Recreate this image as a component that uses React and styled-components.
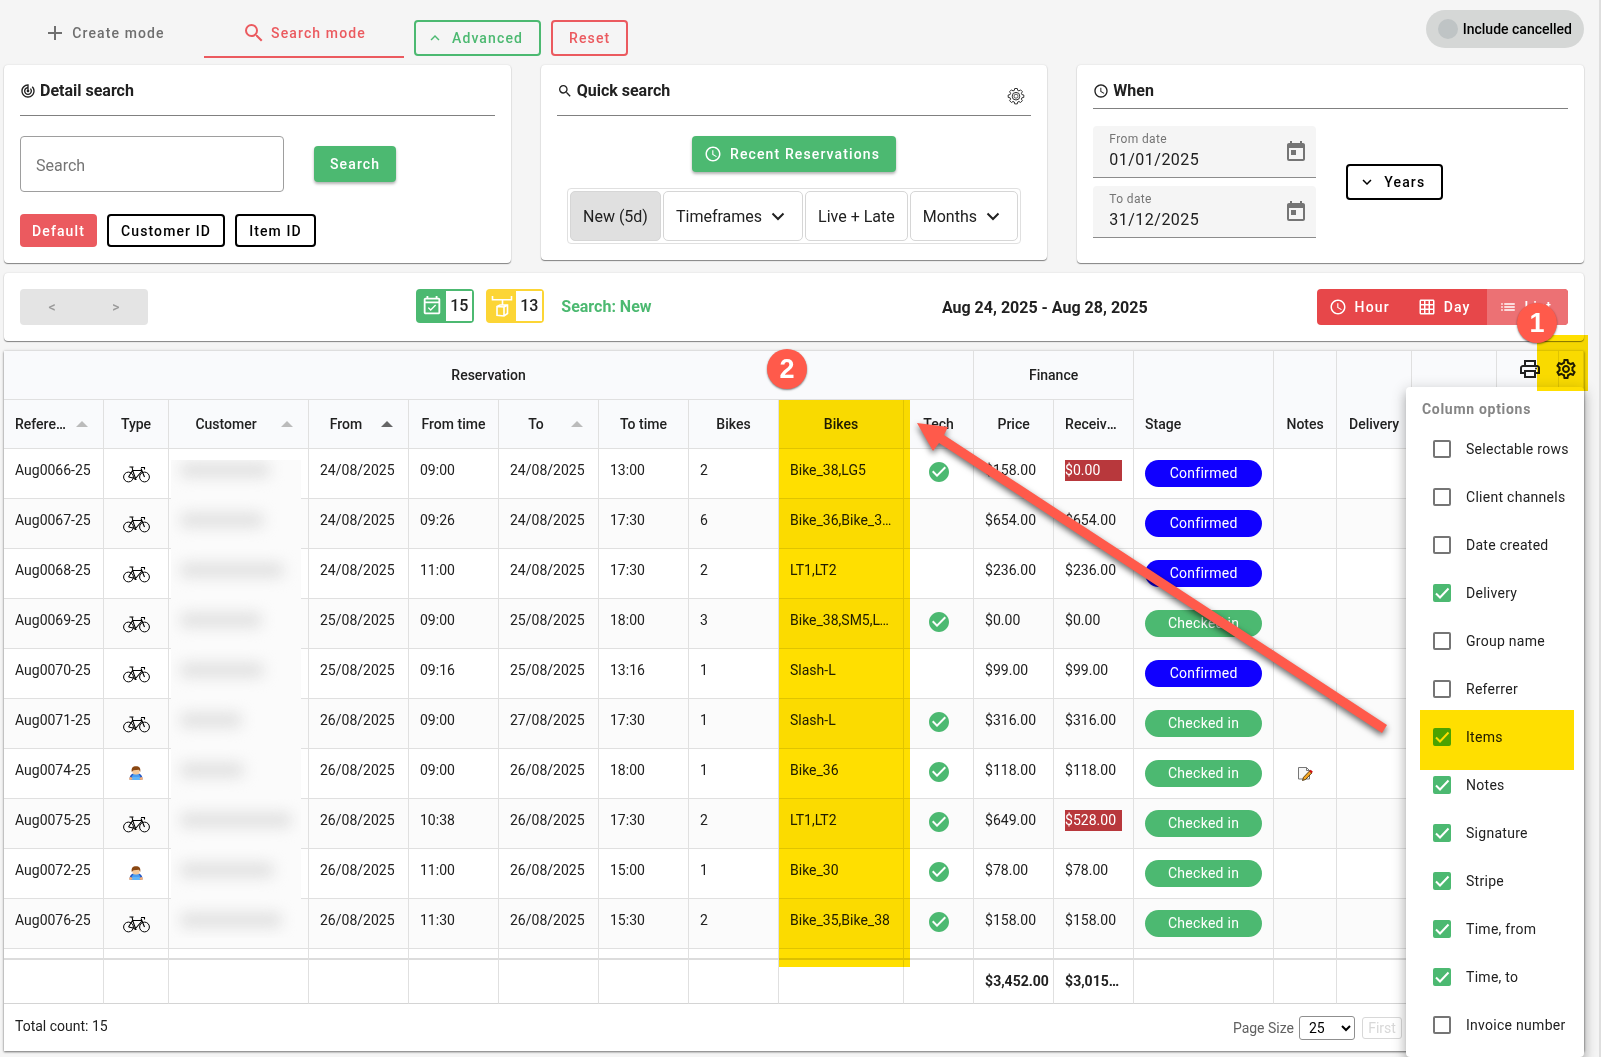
import React from "react";
import styled, { createGlobalStyle, css } from "styled-components";
import {
  MdAdd,
  MdSearch,
  MdTrackChanges,
  MdAccessTime,
  MdExpandLess,
  MdExpandMore,
  MdToday,
  MdOutlineEventAvailable,
  MdGridOn,
  MdList,
  MdCheckCircle,
  MdOutlinePrint,
  MdOutlineSettings,
} from "react-icons/md";

const green = "#4cb971";
const red = "#eb5a5f";
const ink = "#212121";
const line = "#e0e0e0";

const Global = createGlobalStyle`
  *, *::before, *::after { box-sizing: border-box; }
  html { background: #f5f5f5; }
  body { margin: 0; overflow: hidden; }
  body, button, input, select, table {
    font-family: Roboto, "Liberation Sans", sans-serif;
    color: ${ink};
  }
  button { cursor: pointer; }
`;

const Page = styled.div`
  position: relative;
  padding: 10px 15px 6px 4px;
  border-right: 2px solid #dedede;
  background: #f5f5f5;
  font-size: 14px;
`;

const surface = css`
  background: #fff;
  border-radius: 4px;
  box-shadow: 0 1px 1px rgba(0, 0, 0, 0.45), 0 0 2px rgba(0, 0, 0, 0.12);
`;

const buttonText = css`
  font-size: 14px;
  font-weight: 500;
  letter-spacing: 0.08em;
  white-space: nowrap;
`;

/* ---------- top bar ---------- */

const TopBar = styled.header`
  display: flex;
  align-items: flex-start;
  height: 55px;
`;

const Tab = styled.button`
  ${buttonText}
  display: flex;
  align-items: center;
  justify-content: center;
  gap: 5px;
  width: 200px;
  height: 48px;
  padding: 0;
  border: 0;
  border-bottom: 2px solid ${(p) => (p.$active ? red : "transparent")};
  background: none;
  color: ${(p) => (p.$active ? red : "#6f6f6f")};
  svg {
    font-size: 24px;
  }
`;

const TopActions = styled.div`
  display: flex;
  gap: 10px;
  padding: 10px 0 0 10px;
`;

const Button = styled.button`
  ${buttonText}
  display: inline-flex;
  align-items: center;
  justify-content: center;
  gap: 8px;
  height: ${(p) => (p.$small ? 33 : 36)}px;
  padding: 0 ${(p) => (p.$small ? 12 : 16)}px;
  ${(p) => p.$icon && `padding-left: ${p.$outline ? 10 : 12}px;`}
  border-radius: 4px;
  border: ${(p) => (p.$outline ? `2px solid ${p.$outline}` : "0")};
  background: ${(p) => p.$fill || "transparent"};
  color: ${(p) => (p.$fill ? "#fff" : p.$outline)};
  box-shadow: ${(p) => (p.$raised ? "0 2px 3px rgba(0, 0, 0, 0.3)" : "none")};
  svg {
    font-size: 18px;
  }
`;

const CancelToggle = styled.button`
  display: flex;
  align-items: center;
  gap: 5px;
  height: 38px;
  margin-left: auto;
  padding: 0 12px;
  border: 0;
  border-radius: 19px;
  background: #d5d7d6;
  color: #000;
  font-size: 14px;
  font-weight: 500;
`;

const ToggleDot = styled.span`
  width: 20px;
  height: 20px;
  border-radius: 50%;
  background: #bfc4c5;
`;

/* ---------- search cards ---------- */

const Cards = styled.div`
  display: grid;
  grid-template-columns: repeat(3, minmax(0, 1fr));
  align-items: start;
  gap: 30px;
`;

const Card = styled.section`
  ${surface}
  padding: 14px 16px 16px;
`;

const CardHead = styled.div`
  display: flex;
  align-items: flex-start;
  justify-content: space-between;
  height: ${(p) => (p.$short ? 30 : 37)}px;
  border-bottom: 1px solid #808080;
`;

const CardTitle = styled.h2`
  display: flex;
  align-items: center;
  gap: 4px;
  margin: 0;
  font-size: 16px;
  font-weight: 700;
  line-height: 24px;
  svg {
    font-size: 16px;
  }
`;

const GearButton = styled.button`
  padding: 8px 6px 0;
  border: 0;
  background: none;
  line-height: 0;
`;

const SearchRow = styled.div`
  display: flex;
  align-items: center;
  gap: 30px;
  margin-top: 20px;
`;

const SearchInput = styled.input`
  width: 264px;
  height: 56px;
  padding: 2px 15px 0;
  border: 1px solid #9e9e9e;
  border-radius: 4px;
  background: #fff;
  font-size: 16px;
  outline: 0;
  &::placeholder {
    color: #757575;
    opacity: 1;
  }
`;

const TagRow = styled.div`
  display: flex;
  gap: 10px;
  margin-top: 22px;
`;

const QuickBody = styled.div`
  display: flex;
  flex-direction: column;
  align-items: center;
  gap: 16px;
  margin-top: 20px;
`;

const Segments = styled.div`
  display: flex;
  gap: 2px;
  padding: 2px;
  border: 1px solid ${line};
  border-radius: 4px;
`;

const Segment = styled.button`
  display: flex;
  align-items: center;
  gap: 4px;
  height: 50px;
  padding: 0 12px;
  border: 1px solid #d6d6d6;
  border-radius: 5px;
  background: ${(p) => (p.$active ? "#e0e0e0" : "#fff")};
  font-size: 16px;
  white-space: nowrap;
`;

const WhenBody = styled.div`
  display: flex;
  align-items: center;
  gap: 30px;
  margin: 17px 0 9px;
`;

const DateFields = styled.div`
  display: flex;
  flex-direction: column;
  gap: 8px;
  width: 223px;
`;

const DateField = styled.div`
  display: grid;
  grid-template-columns: 1fr auto;
  align-items: center;
  height: 52px;
  padding: 0 8px 0 16px;
  border-bottom: 1px solid #8c8c8c;
  border-radius: 4px 4px 0 0;
  background: #f5f5f5;
  color: #757575;
  svg {
    font-size: 24px;
  }
`;

const DateText = styled.div`
  display: flex;
  flex-direction: column;
  min-width: 0;
  padding-bottom: 4px;
  label {
    font-size: 12px;
    line-height: 20px;
    letter-spacing: 0.03em;
  }
  input {
    width: 100%;
    height: 22px;
    padding: 0;
    border: 0;
    outline: 0;
    background: none;
    font-size: 16px;
    letter-spacing: 0.03em;
  }
`;

/* ---------- result bar ---------- */

const ResultBar = styled.section`
  ${surface}
  display: flex;
  align-items: center;
  height: 68px;
  margin-top: 10px;
  padding: 0 16px;
`;

const Nav = styled.div`
  display: flex;
  border-radius: 4px;
  background: #e4e4e4;
  button {
    width: 64px;
    height: 36px;
    border: 0;
    background: none;
    color: #999;
    font-size: 14px;
    font-weight: 500;
  }
`;

const Summary = styled.div`
  display: flex;
  flex: 1;
  align-items: center;
  justify-content: center;
  gap: 12px;
  padding: 0 22px 2px 0;
`;

const Counter = styled.span`
  display: flex;
  height: 34px;
  padding: 2px;
  border-radius: 4px;
  background: ${(p) => p.$color};
`;

const CounterIcon = styled.span`
  display: flex;
  align-items: center;
  justify-content: center;
  width: 28px;
  color: #fff;
  svg {
    font-size: 22px;
  }
`;

const CounterValue = styled.span`
  width: 26px;
  background: #fff;
  font-size: 16px;
  font-weight: 500;
  line-height: 30px;
  text-align: center;
`;

const SearchName = styled.span`
  padding-left: 5px;
  color: ${green};
  font-size: 16px;
  font-weight: 700;
`;

const DateRange = styled.span`
  font-size: 16px;
  font-weight: 700;
  padding-right: 169px;
`;

const Views = styled.div`
  display: flex;
  overflow: hidden;
  border-radius: 4px;
  background: #e7474a;
`;

const ViewButton = styled.button`
  ${buttonText}
  display: flex;
  align-items: center;
  gap: 8px;
  height: 36px;
  padding: 0 16px 0 12px;
  border: 0;
  background: ${(p) => (p.$active ? "#ec7174" : "transparent")};
  color: #fff;
  svg {
    font-size: 18px;
  }
`;

/* ---------- table ---------- */

const TablePanel = styled.section`
  position: relative;
  margin-top: 10px;
  background: #fff;
  box-shadow: 0 1px 2px rgba(0, 0, 0, 0.5), 0 0 3px rgba(0, 0, 0, 0.15);
`;

const Grid = styled.table`
  width: 100%;
  table-layout: fixed;
  border-collapse: separate;
  border-spacing: 0;
  font-size: 14px;
  line-height: 21px;
`;

const clipped = css`
  white-space: nowrap;
  overflow: hidden;
  text-overflow: ellipsis;
`;

const HeadCell = styled.th`
  ${clipped}
  position: relative;
  height: 49px;
  padding: 0 ${(p) => p.$right || 11}px 0 11px;
  border-right: 1px solid ${line};
  border-bottom: 1px solid ${line};
  background: #f9fafc;
  font-weight: 500;
  text-align: ${(p) => p.$align || "center"};
  vertical-align: ${(p) => (p.rowSpan ? "bottom" : "middle")};
  ${(p) => p.rowSpan && "padding-bottom: 13px;"}
`;

const SortArrow = styled.span`
  position: absolute;
  right: 15px;
  top: 21px;
  border: 6px solid transparent;
  border-top: 0;
  border-bottom-color: ${(p) => (p.$active ? "#666" : "#bbb")};
`;

const Row = styled.tr`
  background: ${(p) => (p.$odd ? "#fbfbfb" : "#fff")};
`;

const Cell = styled.td`
  ${clipped}
  height: 50px;
  padding: 11px 11px 0;
  border-right: 1px solid ${line};
  border-bottom: 1px solid ${line};
  vertical-align: top;
`;

const HiddenCell = styled(Cell)`
  padding: ${(p) => (p.$first ? 11 : 0)}px 7px 0 2px;
  overflow: visible;
`;

const Redacted = styled.div`
  position: relative;
  height: ${(p) => (p.$short ? 39 : 50)}px;
  margin-bottom: -2px;
  padding: ${(p) => (p.$first ? 2 : 13)}px 0 0 9px;
  background: #fbfbfb;
  overflow: hidden;
`;

const Smudge = styled.span`
  display: block;
  height: 16px;
  border-radius: 6px;
  background: #e2e2e2;
  filter: blur(7px);
`;

const Overdue = styled.span`
  display: block;
  background: #b8383c;
  color: #fff;
`;

const Stage = styled.span`
  display: block;
  height: 27px;
  border-radius: 14px;
  background: ${(p) => (p.$confirmed ? "#1000ff" : green)};
  color: #fff;
  line-height: 27px;
  text-align: center;
  letter-spacing: 0.02em;
`;

const IconBox = styled.span`
  display: flex;
  justify-content: center;
  padding-top: ${(p) => p.$top}px;
  color: ${green};
  svg {
    flex: none;
  }
`;

const StripCell = styled.td`
  height: 9px;
  padding: 0;
  border-right: 1px solid ${line};
`;

const TotalCell = styled.td`
  ${clipped}
  height: 46px;
  padding: 0 ${(p) => p.$right || 0}px 0 11px;
  border-top: 2px solid #dcdcdc;
  border-right: 1px solid ${line};
  border-bottom: 1px solid #d4d4d4;
  font-weight: 700;
`;

const TableTools = styled.div`
  position: absolute;
  top: 6px;
  right: 6px;
  display: flex;
  gap: 12px;
  button {
    padding: 0;
    border: 0;
    background: none;
    line-height: 0;
  }
  svg {
    font-size: 24px;
  }
`;

const Pager = styled.footer`
  display: flex;
  align-items: center;
  height: 47px;
  padding: 0 182px 4px 11px;
`;

const PageSize = styled.label`
  display: flex;
  align-items: center;
  gap: 5px;
  margin-left: auto;
  padding-top: 4px;
  color: #616161;
`;

const SizeSelect = styled.select`
  width: 56px;
  height: 24px;
  padding: 0 0 0 5px;
  border: 1px solid #8f8f8f;
  border-radius: 3px;
  background: #fff;
  color: #000;
  font-size: 14px;
`;

const FirstButton = styled.button`
  width: 40px;
  height: 22px;
  margin: 4px 0 0 7px;
  padding: 0;
  border: 1px solid #d8d8d8;
  border-radius: 3px;
  background: #fff;
  font-size: 14px;
  &:disabled {
    color: #d8d8d8;
  }
`;

/* ---------- column menu ---------- */

const Menu = styled.div`
  position: absolute;
  top: 36px;
  right: 0;
  z-index: 2;
  width: 178px;
  padding: 0 0 8px;
  border-radius: 4px;
  background: #fff;
  box-shadow: 0 5px 5px -3px rgba(0, 0, 0, 0.2), 0 8px 10px 1px rgba(0, 0, 0, 0.14),
    0 3px 14px 2px rgba(0, 0, 0, 0.16);
`;

const MenuTitle = styled.div`
  height: 38px;
  padding: 12px 16px 0;
  color: #858585;
  font-weight: 700;
  line-height: 20px;
  letter-spacing: 0.05em;
`;

const Option = styled.label`
  display: flex;
  align-items: center;
  gap: 15px;
  height: 48px;
  padding-left: 27px;
  letter-spacing: 0.02em;
  white-space: nowrap;
`;

const CheckWrap = styled.span`
  display: grid;
  width: 18px;
  height: 18px;
  > * {
    grid-area: 1 / 1;
  }
  svg {
    pointer-events: none;
    z-index: 1;
  }
`;

const Checkbox = styled.input`
  appearance: none;
  width: 18px;
  height: 18px;
  margin: 0;
  border: 2px solid #757575;
  border-radius: 2px;
  &:checked {
    border-color: ${green};
    background: ${green};
  }
`;

/* ---------- guide marks ---------- */

const Highlight = styled.div`
  position: absolute;
  z-index: 3;
  background: #ffdf00;
  mix-blend-mode: multiply;
  pointer-events: none;
`;

const ToolHighlight = styled(Highlight)`
  top: 335px;
  right: 11px;
  width: 51px;
  height: 56px;
`;

const ColumnHighlight = styled(Highlight)`
  top: 400px;
  left: 779px;
  width: 131px;
  height: 567px;
`;

const OptionHighlight = styled(Highlight)`
  top: 710px;
  right: 25px;
  width: 154px;
  height: 60px;
`;

const Marker = styled.div`
  position: absolute;
  z-index: 4;
  width: 40px;
  height: 40px;
  border-radius: 50%;
  background: #ff5a4b;
  box-shadow: 0 1px 2px rgba(0, 0, 0, 0.5);
  color: #fff;
  font: bold 27px/40px "Liberation Sans", sans-serif;
  text-align: center;
`;

const MarkerOne = styled(Marker)`
  top: 303px;
  right: 42px;
`;

const MarkerTwo = styled(Marker)`
  top: 349px;
  left: 767px;
`;

const Arrow = styled.svg`
  position: absolute;
  z-index: 4;
  top: 410px;
  left: 904px;
  filter: drop-shadow(0 3px 3px rgba(0, 0, 0, 0.6));
  pointer-events: none;
`;

/* ---------- drawings ---------- */

const Chevron = () => (
  <svg width="24" height="24" viewBox="0 0 24 24" fill="none" stroke="#212121" strokeWidth="2">
    <path d="M6.500 9.500 12 15l5.500-5.500" />
  </svg>
);

const ThinGear = () => (
  <svg width="18" height="18" viewBox="0 0 18 18" fill="none" stroke="#333" strokeWidth="1">
    <path d="M7.700 1.500h2.600l.4 1.900 1.300.5 1.600-1 1.800 1.800-1 1.600.5 1.300 1.900.4v2.400l-1.900.4-.5 1.300 1 1.600-1.800 1.800-1.600-1-1.300.5-.4 1.900H7.700l-.4-1.900-1.300-.5-1.600 1-1.800-1.800 1-1.600-.5-1.300-1.900-.4V8l1.900-.4.5-1.300-1-1.600 1.800-1.800 1.600 1 1.300-.5z" />
    <circle cx="9" cy="9.200" r="3.800" />
    <circle cx="9" cy="9.200" r="2" strokeWidth=".8" />
  </svg>
);

const RackBox = () => (
  <svg width="22" height="22" viewBox="0 0 22 22" fill="none" stroke="#fff" strokeWidth="1.600">
    <path d="M1.500 1v3.800h19V1M11.500 5v5" />
    <path d="M6 11.500l3-1.500h7.500v8.500L13 21l-7-.8zM6 11.500l7 .5v9M13 12l3.500-2" />
  </svg>
);

const Bicycle = () => (
  <svg width="27" height="17" viewBox="0 0 27 17" fill="none" stroke="#000">
    <circle cx="5.500" cy="11" r="4.900" strokeWidth="1" />
    <circle cx="21.500" cy="11" r="4.900" strokeWidth="1" />
    <path
      d="M5.500 11 9.500 4.500h9.500M9.500 4l3 8.500L19 5M21.500 11 18 2.500M18 1.500h3.500v2M6.500 1h4M9 1l.8 3.500M5.500 11l7 1.500M11.500 13.500h2"
      strokeWidth="1.100"
    />
  </svg>
);

const Person = () => (
  <svg width="14" height="15" viewBox="0 0 14 15">
    <path d="M.8 14C0 11 1.500 8.500 4 7.500h6c2.500 1 4 3.500 3.200 6.500z" fill="#2456c4" />
    <path d="M3 14v-2.500L4.500 8.500h5L11 11.500V14z" fill="#5fb4f8" />
    <path d="M2.500 11 4.500 8h5l2 3z" fill="#4a9df0" />
    <circle cx="1.700" cy="12.500" r="1.600" fill="#f5b078" />
    <circle cx="12.300" cy="12.500" r="1.600" fill="#f5b078" />
    <rect x="3.500" y="2.500" width="7" height="6" rx="2.500" fill="#f3c89a" />
    <path d="M2.800 6C2 2 3.800.3 7 .3S12 2 11.200 6L10 3.800 4.500 4.200z" fill="#8a4712" />
  </svg>
);

const NotePencil = () => (
  <svg width="15" height="15" viewBox="0 0 15 15">
    <path d="M.5 1.500h8l3 3v8.500H.5z" fill="#f7f7f7" stroke="#777" />
    <path d="M8.500 1.500v3h3" fill="none" stroke="#777" />
    <path d="M4.500 14.500l1-3.200L11.500 5l2.300 2L7.500 13.500z" fill="#f5a623" stroke="#3a2500" strokeWidth=".8" />
    <path d="M11.200 5.200l1.500-1.400 2.200 2-1.400 1.500z" fill="#c11" />
  </svg>
);

const Tick = () => (
  <svg width="18" height="18" viewBox="0 0 18 18" fill="none" stroke="#fff" strokeWidth="2">
    <path d="M3 9.500l4 4L15.500 4.500" />
  </svg>
);

/* ---------- data ---------- */

const widths = [100, 65, 140, 100, 90, 100, 90, 90, 125, 70, 80, 80, 140, 63, 75, 85, 62];

const headings = [
  { label: "Reference", sort: true, align: "left" },
  { label: "Type" },
  { label: "Customer", sort: true },
  { label: "From", sort: true, active: true },
  { label: "From time" },
  { label: "To", sort: true },
  { label: "To time" },
  { label: "Bikes" },
  { label: "Bikes" },
  { label: "Tech" },
  { label: "Price" },
  { label: "Received", align: "left", right: 14 },
];

const rows = [
  ["Aug0066-25", "bike", 90, "24/08/2025", "09:00", "24/08/2025", "13:00", 2, "Bike_38,LG5", true, "$158.00", "$0.00", "Confirmed", true],
  ["Aug0067-25", "bike", 84, "24/08/2025", "09:26", "24/08/2025", "17:30", 6, "Bike_36,Bike_37,Bike_38", false, "$654.00", "$654.00", "Confirmed"],
  ["Aug0068-25", "bike", 104, "24/08/2025", "11:00", "24/08/2025", "17:30", 2, "LT1,LT2", false, "$236.00", "$236.00", "Confirmed"],
  ["Aug0069-25", "bike", 82, "25/08/2025", "09:00", "25/08/2025", "18:00", 3, "Bike_38,SM5,LG5", true, "$0.00", "$0.00", "Checked in"],
  ["Aug0070-25", "bike", 84, "25/08/2025", "09:16", "25/08/2025", "13:16", 1, "Slash-L", false, "$99.00", "$99.00", "Confirmed"],
  ["Aug0071-25", "bike", 62, "26/08/2025", "09:00", "27/08/2025", "17:30", 1, "Slash-L", true, "$316.00", "$316.00", "Checked in"],
  ["Aug0074-25", "person", 64, "26/08/2025", "09:00", "26/08/2025", "18:00", 1, "Bike_36", true, "$118.00", "$118.00", "Checked in", false, true],
  ["Aug0075-25", "bike", 112, "26/08/2025", "10:38", "26/08/2025", "17:30", 2, "LT1,LT2", true, "$649.00", "$528.00", "Checked in", true],
  ["Aug0072-25", "person", 94, "26/08/2025", "11:00", "26/08/2025", "15:00", 1, "Bike_30", true, "$78.00", "$78.00", "Checked in"],
  ["Aug0076-25", "bike", 102, "26/08/2025", "11:30", "26/08/2025", "15:30", 2, "Bike_35,Bike_38", true, "$158.00", "$158.00", "Checked in"],
];

const totals = { 10: "$3,452.00", 11: "$3,015.00" };

const options = [
  ["Selectable rows", false],
  ["Client channels", false],
  ["Date created", false],
  ["Delivery", true],
  ["Group name", false],
  ["Referrer", false],
  ["Items", true],
  ["Notes", true],
  ["Signature", true],
  ["Stripe", true],
  ["Time, from", true],
  ["Time, to", true],
  ["Invoice number", false],
];

const columns = Array.from({ length: 18 }, (_, i) => i);

function DateInput({ id, label, value }) {
  return (
    <DateField>
      <DateText>
        <label htmlFor={id}>{label}</label>
        <input id={id} defaultValue={value} />
      </DateText>
      <MdToday />
    </DateField>
  );
}

function ReservationRow({ row, index }) {
  const [ref, type, smudge, from, fromTime, to, toTime, count, items, tech, price, received, stage, overdue, note] = row;
  const first = index === 0;
  const last = index === rows.length - 1;
  return (
    <Row $odd={index % 2 === 1}>
      <Cell>{ref}</Cell>
      <Cell>
        <IconBox $top={6}>{type === "bike" ? <Bicycle /> : <Person />}</IconBox>
      </Cell>
      <HiddenCell $first={first}>
        <Redacted $first={first} $short={first || last}>
          <Smudge style={{ width: smudge }} />
        </Redacted>
      </HiddenCell>
      <Cell>{from}</Cell>
      <Cell>{fromTime}</Cell>
      <Cell>{to}</Cell>
      <Cell>{toTime}</Cell>
      <Cell>{count}</Cell>
      <Cell>{items}</Cell>
      <Cell>{tech && <IconBox $top={0}><MdCheckCircle size={24} /></IconBox>}</Cell>
      <Cell>{price}</Cell>
      <Cell>{overdue ? <Overdue>{received}</Overdue> : received}</Cell>
      <Cell><Stage $confirmed={stage === "Confirmed"}>{stage}</Stage></Cell>
      <Cell>{note && <IconBox $top={6}><NotePencil /></IconBox>}</Cell>
      <Cell />
      <Cell />
      <Cell />
      <Cell />
    </Row>
  );
}

export default function App() {
  return (
    <Page>
      <Global />
      <TopBar>
        <Tab><MdAdd />Create mode</Tab>
        <Tab $active><MdSearch />Search mode</Tab>
        <TopActions>
          <Button $icon $outline={green}><MdExpandLess />Advanced</Button>
          <Button $outline={red}>Reset</Button>
        </TopActions>
        <CancelToggle><ToggleDot />Include cancelled</CancelToggle>
      </TopBar>

      <Cards>
        <Card>
          <CardHead><CardTitle><MdTrackChanges />Detail search</CardTitle></CardHead>
          <SearchRow>
            <SearchInput aria-label="Search" placeholder="Search" />
            <Button $fill={green} $raised>Search</Button>
          </SearchRow>
          <TagRow>
            <Button $small $fill={red}>Default</Button>
            <Button $small $outline="#000">Customer ID</Button>
            <Button $small $outline="#000">Item ID</Button>
          </TagRow>
        </Card>

        <Card>
          <CardHead>
            <CardTitle><MdSearch />Quick search</CardTitle>
            <GearButton aria-label="Quick search settings"><ThinGear /></GearButton>
          </CardHead>
          <QuickBody>
            <Button $icon $fill={green} $raised><MdAccessTime />Recent Reservations</Button>
            <Segments>
              <Segment $active>New (5d)</Segment>
              <Segment>Timeframes<Chevron /></Segment>
              <Segment>Live + Late</Segment>
              <Segment>Months<Chevron /></Segment>
            </Segments>
          </QuickBody>
        </Card>

        <Card>
          <CardHead $short><CardTitle><MdAccessTime />When</CardTitle></CardHead>
          <WhenBody>
            <DateFields>
              <DateInput id="from-date" label="From date" value="01/01/2025" />
              <DateInput id="to-date" label="To date" value="31/12/2025" />
            </DateFields>
            <Button $icon $outline="#000"><MdExpandMore />Years</Button>
          </WhenBody>
        </Card>
      </Cards>

      <ResultBar>
        <Nav>
          <button>&lt;</button>
          <button>&gt;</button>
        </Nav>
        <Summary>
          <Counter $color={green}>
            <CounterIcon><MdOutlineEventAvailable /></CounterIcon>
            <CounterValue>15</CounterValue>
          </Counter>
          <Counter $color="#fcd535">
            <CounterIcon><RackBox /></CounterIcon>
            <CounterValue>13</CounterValue>
          </Counter>
          <SearchName>Search: New</SearchName>
        </Summary>
        <DateRange>Aug 24, 2025 - Aug 28, 2025</DateRange>
        <Views>
          <ViewButton><MdAccessTime />Hour</ViewButton>
          <ViewButton><MdGridOn />Day</ViewButton>
          <ViewButton $active><MdList />List</ViewButton>
        </Views>
      </ResultBar>

      <TablePanel>
        <Grid>
          <colgroup>
            {columns.map((c) => <col key={c} style={{ width: widths[c] }} />)}
          </colgroup>
          <thead>
            <tr>
              <HeadCell colSpan={10}>Reservation</HeadCell>
              <HeadCell colSpan={2}>Finance</HeadCell>
              <HeadCell rowSpan={2} $align="left">Stage</HeadCell>
              <HeadCell rowSpan={2}>Notes</HeadCell>
              <HeadCell rowSpan={2}>Delivery</HeadCell>
              <HeadCell rowSpan={2} />
              <HeadCell rowSpan={2} />
              <HeadCell rowSpan={2} />
            </tr>
            <tr>
              {headings.map((h, i) => (
                <HeadCell key={i} $right={h.sort ? 36 : h.right} $align={h.align}>
                  {h.label}
                  {h.sort && <SortArrow $active={h.active} />}
                </HeadCell>
              ))}
            </tr>
          </thead>
          <tbody>
            {rows.map((row, i) => <ReservationRow key={row[0]} row={row} index={i} />)}
            <tr>{columns.map((c) => <StripCell key={c} />)}</tr>
          </tbody>
          <tfoot>
            <tr>
              {columns.map((c) => (
                <TotalCell key={c} $right={c === 11 ? 14 : 0}>{totals[c]}</TotalCell>
              ))}
            </tr>
          </tfoot>
        </Grid>
        <Pager>
          <span>Total count: 15</span>
          <PageSize>
            Page Size
            <SizeSelect defaultValue="25"><option>25</option></SizeSelect>
          </PageSize>
          <FirstButton disabled>First</FirstButton>
        </Pager>
        <TableTools>
          <button aria-label="Print"><MdOutlinePrint /></button>
          <button aria-label="Columns"><MdOutlineSettings /></button>
        </TableTools>
        <Menu>
          <MenuTitle>Column options</MenuTitle>
          {options.map(([label, checked]) => (
            <Option key={label}>
              <CheckWrap>
                <Checkbox type="checkbox" defaultChecked={checked} />
                {checked && <Tick />}
              </CheckWrap>
              {label}
            </Option>
          ))}
        </Menu>
      </TablePanel>

      <ToolHighlight />
      <ColumnHighlight />
      <OptionHighlight />
      <MarkerOne>1</MarkerOne>
      <MarkerTwo>2</MarkerTwo>
      <Arrow width="500" height="340" viewBox="0 0 500 340">
        <path d="M13 13L44 17L40 25L483 315L478 323L35 33L29 41Z" fill="#ff5a4b" />
      </Arrow>
    </Page>
  );
}
